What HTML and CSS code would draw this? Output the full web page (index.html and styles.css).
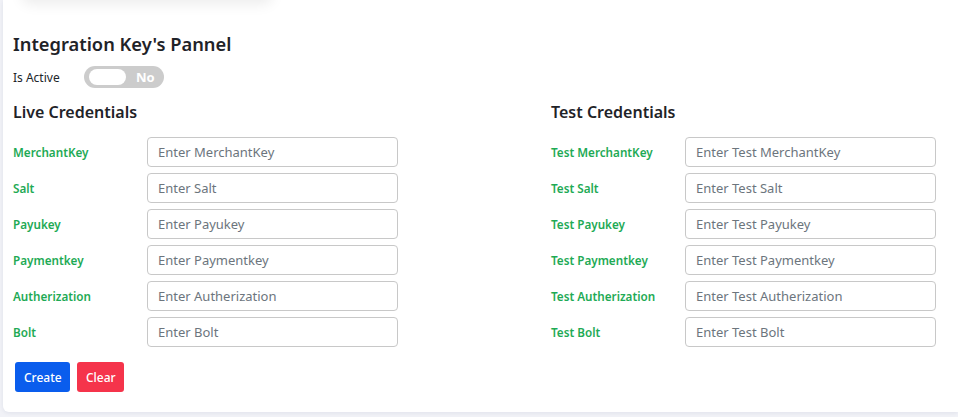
FILE: index.html
```html
<!DOCTYPE html>
<html>
<head>
<meta charset="utf-8">
<link rel="stylesheet" href="styles.css">
</head>
<body>
<div class="page">
  <div class="ghost"></div>
  <div class="card">
    <h2 class="title">Integration Key's Pannel</h2>
    <div class="active-row">
      <span class="active-label">Is Active</span>
      <div class="toggle"><span class="knob"></span><span class="toggle-text">No</span></div>
    </div>
    <div class="cols">
      <div class="col">
        <h3 class="col-title">Live Credentials</h3>
        <div class="field"><label>MerchantKey</label><input placeholder="Enter MerchantKey"></div>
        <div class="field"><label>Salt</label><input placeholder="Enter Salt"></div>
        <div class="field"><label>Payukey</label><input placeholder="Enter Payukey"></div>
        <div class="field"><label>Paymentkey</label><input placeholder="Enter Paymentkey"></div>
        <div class="field"><label>Autherization</label><input placeholder="Enter Autherization"></div>
        <div class="field"><label>Bolt</label><input placeholder="Enter Bolt"></div>
      </div>
      <div class="col">
        <h3 class="col-title">Test Credentials</h3>
        <div class="field"><label>Test MerchantKey</label><input placeholder="Enter Test MerchantKey"></div>
        <div class="field"><label>Test Salt</label><input placeholder="Enter Test Salt"></div>
        <div class="field"><label>Test Payukey</label><input placeholder="Enter Test Payukey"></div>
        <div class="field"><label>Test Paymentkey</label><input placeholder="Enter Test Paymentkey"></div>
        <div class="field"><label>Test Autherization</label><input placeholder="Enter Test Autherization"></div>
        <div class="field"><label>Test Bolt</label><input placeholder="Enter Test Bolt"></div>
      </div>
    </div>
    <div class="actions">
      <button class="btn btn-create">Create</button>
      <button class="btn btn-clear">Clear</button>
    </div>
  </div>
</div>
</body>
</html>
```
FILE: styles.css
```css
* { box-sizing: border-box; }
html, body { margin: 0; padding: 0; }
body {
  background: #f1f2f7;
  font-family: "Noto Sans", "Open Sans", sans-serif;
  color: #212529;
  width: 958px;
  height: 417px;
  overflow: hidden;
}
.page {
  position: relative;
  padding: 0 0 0 3px;
}
.ghost {
  position: absolute;
  left: 22px;
  top: -40px;
  width: 250px;
  height: 40px;
  border-radius: 8px;
  background: #fff;
  box-shadow: 0 4px 14px rgba(0,0,0,0.08);
}
.card {
  background: #fff;
  width: 100%;
  height: 412px;
  border-radius: 0 0 0 6px;
  box-shadow: 0 1px 4px rgba(30,40,90,0.08);
  padding: 31px 10px 0 10px;
}
.title {
  margin: 0;
  font-size: 18.3px;
  font-weight: 600;
  line-height: 26px;
  color: #1f2328;
}
.active-row {
  display: flex;
  align-items: center;
  margin-top: 9px;
  height: 22px;
}
.active-label {
  font-size: 12px;
  width: 71px;
  color: #212529;
}
.toggle {
  width: 80px;
  height: 22px;
  border-radius: 11px;
  background: #cccccc;
  display: flex;
  align-items: center;
  padding-left: 5px;
}
.knob {
  width: 37px;
  height: 16px;
  border-radius: 8px;
  background: #fff;
}
.toggle-text {
  color: #fff;
  font-weight: 700;
  font-size: 13px;
  margin-left: 10px;
}
.cols {
  display: grid;
  grid-template-columns: 538px 1fr;
  margin-top: 12px;
}
.col-title {
  margin: 0 0 13px 0;
  font-size: 16px;
  font-weight: 600;
  line-height: 24px;
  color: #1f2328;
}
.field {
  display: flex;
  align-items: center;
  height: 30px;
  margin-bottom: 6px;
}
.field label {
  width: 134px;
  font-size: 11.7px;
  font-weight: 600;
  color: #1eaa55;
}
.field input {
  width: 251px;
  height: 30px;
  border: 1px solid #c8c8c8;
  border-radius: 4px;
  padding: 0 10px;
  font-family: "Noto Sans", "Open Sans", sans-serif;
  font-size: 13px;
  color: #212529;
  outline: none;
}
.field input::placeholder { color: #6c757d; }
.actions {
  display: flex;
  gap: 7px;
  margin-top: 9px;
  padding-left: 2px;
}
.btn {
  height: 30px;
  border: none;
  border-radius: 3px;
  color: #fff;
  font-family: "Noto Sans", "Open Sans", sans-serif;
  font-size: 12px;
  font-weight: 500;
  padding: 0 9px;
}
.btn-create { background: #0a5ded; width: 55px; }
.btn-clear { background: #f5344b; width: 47px; }
```
